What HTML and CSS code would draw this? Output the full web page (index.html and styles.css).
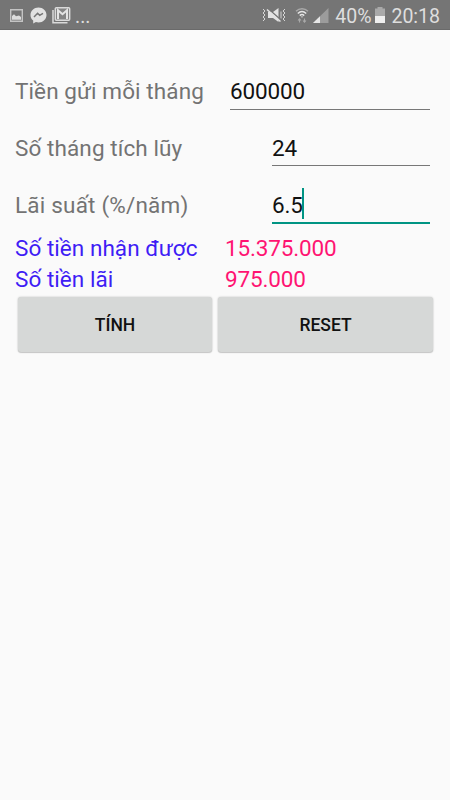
FILE: index.html
```
<!DOCTYPE html>
<html lang="vi">
<head>
    <meta charset="UTF-8">
    <meta name="viewport" content="width=device-width, initial-scale=1.0">
    <title>Tiền gửi tích lũy</title>
    <link rel="stylesheet" href="styles.css">
</head>
<body>
    <header class="status-bar">
        <div class="status-left">
            <svg class="icon-image" width="13" height="13" viewBox="0 0 13 13">
                <path d="M.7.7h11.6v11.6H.7z" fill="none" stroke="#c4c4c4" stroke-width="1.4"/>
                <path d="M2 10.8V7l2-1.8 2 2L9 6.5l2 1.5v2.8z" fill="#dcdcdc"/>
            </svg>
            <svg class="icon-messenger" width="17" height="17" viewBox="0 0 17 17">
                <path d="M8.5.5C4 .5.5 3.8.5 8c0 2.3 1 4.3 2.7 5.6v3l2.7-1.5c.8.2 1.7.4 2.6.4 4.5 0 8-3.3 8-7.5S13 .5 8.5.5z" fill="#e2e2e2"/>
                <path d="M4 10l3.6-3.7 2.1 2L13 6.3" fill="none" stroke="#757575" stroke-width="1.5"/>
            </svg>
            <svg class="icon-mail" width="19" height="17" viewBox="0 0 19 17">
                <path d="M1 3v12.8h14.5" fill="none" stroke="#dadada" stroke-width="1.5"/>
                <rect x="3.3" y=".8" width="14.4" height="12.4" rx="1" fill="#858585" stroke="#dadada" stroke-width="1.4"/>
                <path d="M6 12V3.2l4.5 4 4.5-4V12" fill="none" stroke="#e4e4e4" stroke-width="2"/>
            </svg>
            <span class="more">...</span>
        </div>
        <div class="status-right">
            <svg class="icon-mute" width="24" height="16" viewBox="0 0 24 16">
                <path d="M1 2l2 2-2 2 2 2-2 2 2 2-2 2M23 2l-2 2 2 2-2 2 2 2-2 2 2 2M19 4.5v7" fill="none" stroke="#d5d5d5" stroke-width="1"/>
                <path d="M6 5h5l5.5-4v14L11 11H6z" fill="#e2e2e2"/>
                <path d="M6 1.5L19 13" stroke="#757575" stroke-width="1.5"/>
                <path d="M5 2.5l13.5 12" stroke="#e2e2e2" stroke-width="1.6"/>
            </svg>
            <svg class="icon-wifi" width="14" height="16" viewBox="0 0 14 16">
                <path d="M1 4.2c3.5-3.3 8.5-3.3 12 0" fill="none" stroke="#a9a9a9" stroke-width="1.5"/>
                <path d="M2.8 6.5c2.5-2.3 5.9-2.3 8.4 0M4.8 8.6c1.3-1.2 3.1-1.2 4.4 0" fill="none" stroke="#e6e6e6" stroke-width="1.5"/>
                <path d="M5.8 9.5h2.4L7 10.7z" fill="#e6e6e6"/>
                <path d="M4.5 15.5V12M3 13.5l1.5-1.7L6 13.5M9.5 11.5V15M8 13.5l1.5 1.7 1.5-1.7" fill="none" stroke="#a9a9a9" stroke-width="1.1"/>
            </svg>
            <svg class="icon-signal" width="16" height="15" viewBox="0 0 16 15">
                <path d="M15.5 0v15H0z" fill="#9c9c9c"/>
                <path d="M7 8.2V15H0z" fill="#e6e6e6"/>
            </svg>
            <span class="percent">40%</span>
            <svg class="icon-battery" width="10" height="16" viewBox="0 0 10 16">
                <path d="M0 1.5h2.5V0h5v1.500H10V9H0z" fill="#a9a9a9"/>
                <path d="M0 9h10v7H0z" fill="#efefef"/>
            </svg>
            <span class="clock">20:18</span>
        </div>
    </header>

    <main class="container">
        <form id="savingForm" autocomplete="off">
            <div class="form-group">
                <label for="deposit">Tiền gửi mỗi tháng</label>
                <div class="field field-wide">
                    <input type="text" id="deposit" value="600000">
                </div>
            </div>
            <div class="form-group">
                <label for="months">Số tháng tích lũy</label>
                <div class="field">
                    <input type="text" id="months" value="24">
                </div>
            </div>
            <div class="form-group">
                <label for="rate" class="label-rate">Lãi suất (%/năm)</label>
                <div class="field active">
                    <input type="text" id="rate" value="6.5">
                    <span class="caret"></span>
                </div>
            </div>

            <dl class="result">
                <dt>Số tiền nhận được</dt>
                <dd>15.375.000</dd>
                <dt>Số tiền lãi</dt>
                <dd>975.000</dd>
            </dl>

            <div class="actions">
                <button type="button" id="calcBtn">TÍNH</button>
                <button type="reset" id="resetBtn">RESET</button>
            </div>
        </form>
    </main>
</body>
</html>
```
FILE: styles.css
```
:root {
    --bar-color: #757575;
    --bg-color: #fafafa;
    --label-color: #737373;
    --accent-color: #009483;
    --title-color: #3f1df5;
    --value-color: #ff1472;
    --button-color: #d6d8d7;
}

* {
    margin: 0;
    padding: 0;
    box-sizing: border-box;
}

body {
    font-family: Roboto, "Noto Sans", sans-serif;
    font-size: 22.5px;
    line-height: 31px;
    background-color: var(--bg-color);
    color: #111;
    min-height: 100vh;
}

.status-bar {
    display: flex;
    justify-content: space-between;
    height: 30px;
    padding: 1px 10px 0;
    border-bottom: 1px solid #6a6a6a;
    background-color: var(--bar-color);
    color: #dedede;
    font-size: 19.5px;
}

.status-left,
.status-right {
    display: flex;
    align-items: center;
}

.percent,
.clock {
    padding-top: 2px;
}

.icon-messenger {
    margin: 1px 0 0 7px;
}

.icon-mail {
    margin-left: 5px;
}

.more {
    margin-left: 4px;
    padding-top: 2px;
}

.icon-wifi {
    margin-left: 9px;
}

.icon-signal {
    margin-left: 4px;
}

.percent {
    margin-left: 6px;
}

.icon-battery {
    margin-left: 4px;
}

.clock {
    margin-left: 6px;
}

.container {
    padding: 23px 15px 0;
}

.form-group {
    display: flex;
    justify-content: space-between;
    align-items: flex-end;
    height: 57px;
    padding-right: 5px;
}

.form-group:nth-child(2) {
    height: 56px;
}

.form-group:nth-child(2) label {
    padding-bottom: 2px;
}

.form-group:nth-child(3) {
    height: 58px;
}

label {
    color: var(--label-color);
    padding-bottom: 3px;
    letter-spacing: 0.1px;
}

.label-rate {
    letter-spacing: 0.2px;
}

.field {
    position: relative;
    width: 158px;
    height: 34px;
    border-bottom: 1px solid #777;
}

.field-wide {
    width: 200px;
}

.field.active {
    height: 36px;
    border-bottom: 2px solid var(--accent-color);
}

#months {
    height: 32px;
}

input {
    display: block;
    width: 100%;
    height: 31px;
    border: none;
    outline: none;
    background: none;
    color: inherit;
    font: inherit;
    letter-spacing: -0.15px;
}

.active input {
    height: 33px;
}

.caret {
    position: absolute;
    left: 30px;
    top: 0;
    width: 2px;
    height: 31px;
    background-color: var(--accent-color);
}

.result {
    display: grid;
    grid-template-columns: 210px 1fr;
    margin-top: 9px;
    color: var(--title-color);
}

.result dt {
    letter-spacing: 0.05px;
}

.result dd {
    color: var(--value-color);
    letter-spacing: -0.15px;
}

.actions {
    display: flex;
    gap: 6px;
    padding: 2px 2px 0 3px;
}

button {
    width: 194px;
    height: 55px;
    border: none;
    border-radius: 3px;
    background-color: var(--button-color);
    box-shadow: 0 0 2px rgba(0, 0, 0, 0.25), 0 1px 1px rgba(0, 0, 0, 0.15);
    color: #111;
    font-family: inherit;
    font-size: 17.5px;
    font-weight: 500;
}

#resetBtn {
    flex: 1;
}
```
